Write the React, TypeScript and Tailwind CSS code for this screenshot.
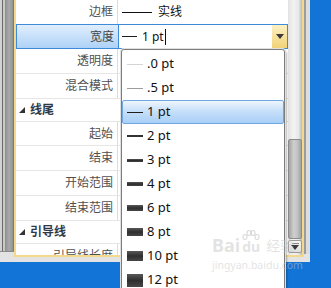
const labelRowsA = [
  { label: "透明度", h: "h-[25px]" },
  { label: "混合模式", h: "h-[25px]" },
];

const labelRowsB = [
  { label: "起始", h: "h-[24px]" },
  { label: "结束", h: "h-[25px]" },
  { label: "开始范围", h: "h-[25px]" },
  { label: "结束范围", h: "h-[25px]" },
];

const widths = [
  { label: ".0 pt", bar: "h-[1px] bg-[#d4d4d4]" },
  { label: ".5 pt", bar: "h-[1px] bg-[#9c9c9c]" },
  { label: "1 pt", bar: "h-[1px] bg-[#1e1e1e]", selected: true },
  { label: "2 pt", bar: "h-[2px] bg-[#333333]" },
  { label: "3 pt", bar: "h-[3px] bg-[linear-gradient(#555,#2e2e2e,#444)]" },
  { label: "4 pt", bar: "h-[4px] bg-[linear-gradient(#555,#2e2e2e,#444)]" },
  { label: "6 pt", bar: "h-[6px] bg-[linear-gradient(#585858,#2f2f2f,#474747)]" },
  { label: "8 pt", bar: "h-[8px] bg-[linear-gradient(#585858,#2f2f2f,#474747)]" },
  { label: "10 pt", bar: "h-[10px] bg-[linear-gradient(#585858,#2f2f2f,#474747)]" },
  { label: "12 pt", bar: "h-[13px] bg-[linear-gradient(#585858,#2f2f2f,#474747)]" },
];

function PropRow({ label, h }: { label: string; h: string }) {
  return (
    <div className={`flex border-b border-[#e6e6e6] ${h}`}>
      <div className="flex w-[102px] items-center justify-end border-r border-[#dcdcdc] pr-[4px] text-[12px] text-[#505050]">
        {label}
      </div>
      <div className="flex-1" />
    </div>
  );
}

function SectionRow({ label }: { label: string }) {
  return (
    <div className="flex h-[23px] items-center border-b border-[#e6e6e6] pl-[3px]">
      <svg width="6" height="6" viewBox="0 0 6 6">
        <polygon points="6,0 6,6 0,6" fill="#333" />
      </svg>
      <span className="ml-[5px] text-[12px] font-semibold text-[#2f3a48]">{label}</span>
    </div>
  );
}

function DownArrow() {
  return (
    <svg width="8" height="5" viewBox="0 0 8 5">
      <polygon points="0,0 8,0 4,5" fill="#3a3a3a" />
    </svg>
  );
}

export default function App() {
  return (
    <div className="relative h-[288px] w-[331px] overflow-hidden bg-[#1274d6] font-['Noto_Sans','Noto_Sans_CJK_SC',sans-serif]">
      <div className="flex h-[262px] w-[310px] bg-[#e3e3e3]">
        {/* window frame, left */}
        <div className="flex h-[252px] w-[14px] border-b border-[#8a8a8a]">
          <div className="w-[2px] bg-[#d2d2d2]" />
          <div className="w-[1px] bg-[#6a6a6a]" />
          <div className="w-[2px] bg-[#c9c9c9]" />
          <div className="w-[8px] bg-[linear-gradient(90deg,#8e8e8e,#a9a9a9_50%,#939393)]" />
          <div className="w-[1px] bg-[#7a7a7a]" />
        </div>

        {/* property grid */}
        <div className="flex h-[257px] w-[290px] overflow-hidden border-x-2 border-b-2 border-[#f3d98c] bg-white">
          <div className="w-[272px]">
            <div className="flex h-[24px]">
              <div className="flex w-[102px] items-center justify-end border-r border-[#dcdcdc] pr-[4px] text-[12px] text-[#505050]">
                边框
              </div>
              <div className="flex flex-1 items-center pl-[4px]">
                <div className="h-[1px] w-[30px] bg-[#111]" />
                <span className="ml-[6px] text-[12px] text-[#111]">实线</span>
              </div>
            </div>

            <div className="flex h-[25px]">
              <div className="flex w-[102px] items-center justify-end border border-r-0 border-[#3d8ad8] bg-[linear-gradient(#e1eefd,#aed2f7)] pr-[4px] text-[12px] text-[#444]">
                宽度
              </div>
              <div className="flex flex-1 items-center border border-[#3d8ad8] bg-white">
                <div className="ml-[3px] h-[1px] w-[15px] bg-[#1e1e1e]" />
                <span className="ml-[5px] text-[12px] text-[#111]">1 pt</span>
                <div className="ml-[1px] h-[16px] w-[1px] bg-[#111]" />
                <div className="flex-1" />
                <div className="flex h-full w-[15px] items-center justify-center bg-[linear-gradient(#fcf0c4,#f1d276)]">
                  <DownArrow />
                </div>
              </div>
            </div>

            {labelRowsA.map((r) => (
              <PropRow key={r.label} label={r.label} h={r.h} />
            ))}
            <SectionRow label="线尾" />
            {labelRowsB.map((r) => (
              <PropRow key={r.label} label={r.label} h={r.h} />
            ))}
            <SectionRow label="引导线" />
            <PropRow label="引导线长度" h="h-[25px]" />
          </div>

          {/* scrollbar */}
          <div className="flex w-[14px] flex-col bg-[linear-gradient(90deg,#e2e2e2,#f3f3f3_40%,#e8e8e8_75%,#b9b9b9)]">
            <div className="h-[139px] shrink-0" />
            <div className="h-[100px] shrink-0 rounded-[2px] border border-[#8b8b8b] bg-[linear-gradient(90deg,#a4a4a4,#cfcfcf_40%,#c2c2c2_70%,#a2a2a2)]" />
            <div className="mt-[1px] flex h-[13px] shrink-0 flex-col items-center justify-center gap-[1px] rounded-[2px] border border-[#9a9a9a] bg-[linear-gradient(#f4f4f4,#dedede)]">
              <div className="h-[1px] w-[7px] bg-[#888]" />
              <DownArrow />
            </div>
          </div>
        </div>

        {/* window frame, right */}
        <div className="flex h-[254px] w-[6px]">
          <div className="w-[2px] bg-[#9c9c9c]" />
          <div className="w-[4px] bg-[#dcdcdc]" />
        </div>
      </div>

      {/* width dropdown */}
      <div className="absolute left-[121px] top-[49px] h-[245px] w-[164px] rounded-t-[3px] border border-[#7c7c7c] bg-white pt-[2px] shadow-[0_0_0_1px_#e0e0e0,2px_2px_2px_rgba(0,0,0,0.28)]">
        {widths.map((w) =>
          w.selected ? (
            <div
              key={w.label}
              className="flex h-[24px] items-center rounded-[2px] border border-[#6fa7e3] bg-[linear-gradient(#eef5fe,#c4def9_50%,#a9cff7)] pl-[4px]"
            >
              <div className={`w-[16px] ${w.bar}`} />
              <span className="ml-[4px] text-[13px] text-[#111]">{w.label}</span>
            </div>
          ) : (
            <div key={w.label} className="flex h-[24px] items-center pl-[5px]">
              <div className={`w-[16px] ${w.bar}`} />
              <span className="ml-[4px] text-[13px] text-[#111]">{w.label}</span>
            </div>
          )
        )}
      </div>

      {/* watermark */}
      <div className="pointer-events-none absolute left-[212px] top-[230px] text-[rgba(200,200,200,0.5)]">
        <div className="flex items-end">
          <span className="text-[18px] font-bold leading-[18px]">Bai</span>
          <div className="ml-[2px] flex flex-col items-center">
            <svg width="18" height="10" viewBox="0 0 18 10">
              <g fill="none" stroke="rgba(190,190,190,0.55)" strokeWidth="1.2">
                <ellipse cx="3" cy="7" rx="2" ry="2.5" />
                <ellipse cx="7" cy="3" rx="2" ry="2.5" />
                <ellipse cx="11" cy="3" rx="2" ry="2.5" />
                <ellipse cx="15" cy="7" rx="2" ry="2.5" />
              </g>
            </svg>
            <span className="text-[14px] font-bold leading-[14px]">du</span>
          </div>
          <span className="ml-[6px] text-[14px] leading-[16px]">经验</span>
        </div>
        <div className="mt-[6px] text-[10.5px] leading-[11px]">jingyan.baidu.com</div>
      </div>
    </div>
  );
}
